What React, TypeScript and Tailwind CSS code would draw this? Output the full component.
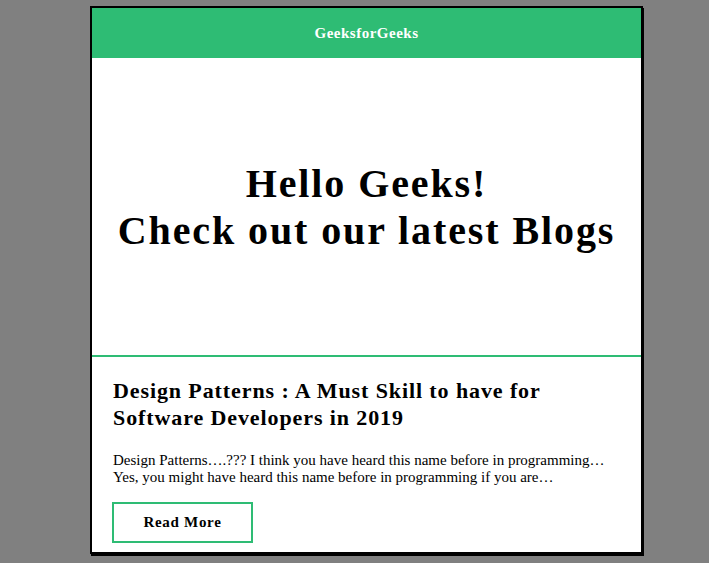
export default function App() {
  return (
    <div className="min-h-[563px] w-full bg-[#808080] pt-[6px]" style={{ fontFamily: '"Liberation Serif", "Times New Roman", serif' }}>
      <div className="ml-[90px] w-[553px] h-[548px] border-2 border-black bg-white shadow-[1px_2px_0_#000] flex flex-col overflow-hidden">
        {/* Header */}
        <div className="h-[50px] bg-[#2ebc74] flex items-center justify-center">
          <span className="text-white font-bold text-[15px] tracking-[0.5px]">GeeksforGeeks</span>
        </div>

        {/* Hero */}
        <div className="h-[299px] border-b-2 border-[#2ebc74] flex items-center justify-center">
          <h1 className="text-center font-bold text-[40px] leading-[47px] tracking-[1.9px] text-black">
            Hello Geeks!
            <br />
            Check out our latest Blogs
          </h1>
        </div>

        {/* Blog */}
        <div className="pl-[21px] pr-[20px] pt-[20px]">
          <h2 className="font-bold text-[22px] leading-[27px] tracking-[0.9px] text-black">
            Design Patterns : A Must Skill to have for Software Developers in 2019
          </h2>
          <p className="mt-[21px] text-[15px] leading-[17px] text-black">
            Design Patterns….??? I think you have heard this name before in programming… Yes, you might have heard this name before in programming if you are…
          </p>
          <button className="mt-[16px] -ml-px w-[141px] h-[41px] border-2 border-[#2ebc74] bg-white font-bold text-[15px] tracking-[0.7px] text-black">
            Read More
          </button>
        </div>
      </div>
    </div>
  );
}
